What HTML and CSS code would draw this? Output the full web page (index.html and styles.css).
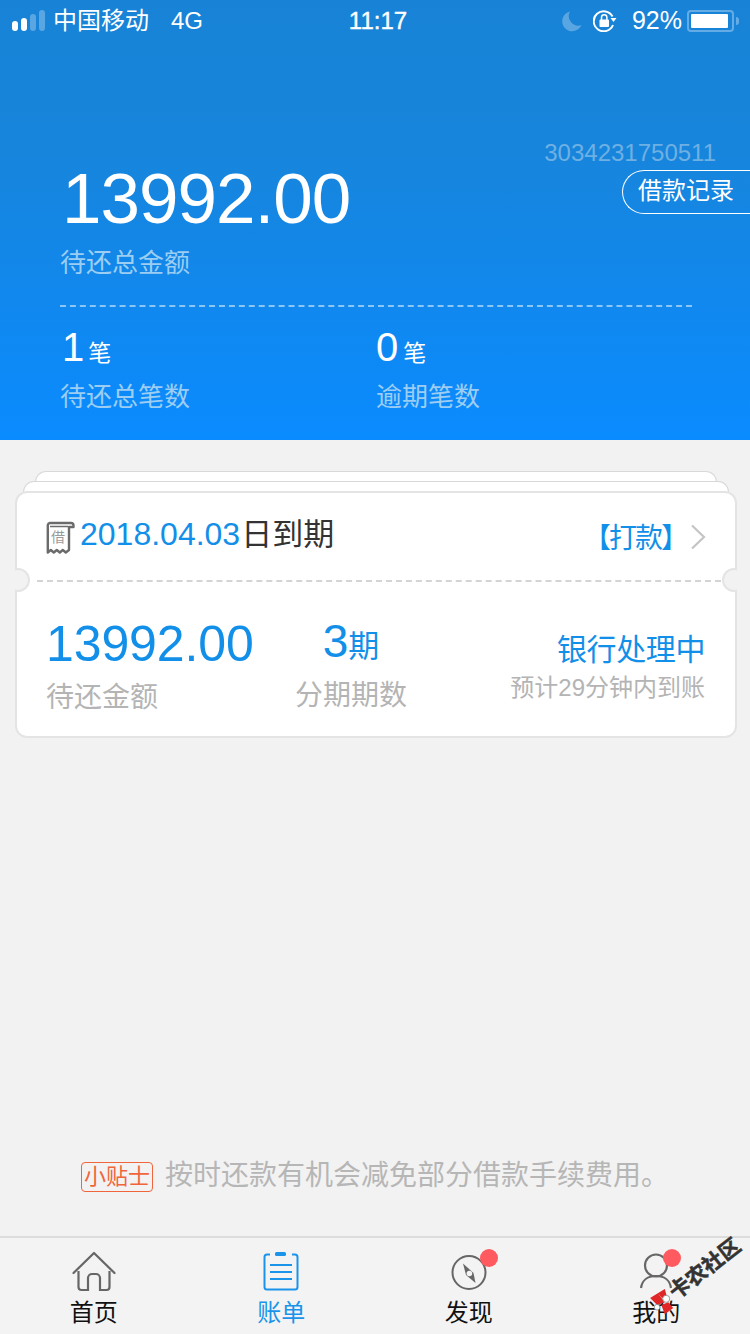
FILE: index.html
```html
<!DOCTYPE html>
<html lang="zh">
<head>
<meta charset="utf-8">
<title>账单</title>
<link rel="stylesheet" href="styles.css">
</head>
<body>
<div class="app">
  <header class="hero">
    <div class="status">
      <div class="status-left">
        <div class="signal"><i class="on s1"></i><i class="on s2"></i><i class="s3"></i><i class="s4"></i></div>
        <span class="carrier">中国移动</span>
        <span class="net">4G</span>
      </div>
      <div class="clock">11:17</div>
      <div class="status-right">
        <svg class="moon" width="20" height="22" viewBox="0 0 20 22"><path d="M8 1.500A10 10 0 1 0 19.500 15 9.500 9.500 0 0 1 8 1.500z" fill="#5aa6e2"/></svg>
        <svg class="lock" width="24" height="22" viewBox="0 0 24 22"><path d="M19.500 6.500A10 10 0 1 0 20 15" fill="none" stroke="#fff" stroke-width="2"/><path d="M17.500 8h6l-3 4z" fill="#fff"/><rect x="6.500" y="9.500" width="9.500" height="7.500" rx="1" fill="#fff"/><path d="M8.500 10V7.500a2.700 2.700 0 0 1 5.400 0V10" fill="none" stroke="#fff" stroke-width="1.500"/></svg>
        <span class="pct">92%</span>
        <div class="battery"><div class="level"></div></div>
        <div class="nub"></div>
      </div>
    </div>
    <div class="summary">
      <div class="summary-main">
        <div class="total">
          <div class="total-num">13992.00</div>
          <div class="hero-label">待还总金额</div>
        </div>
        <div class="records">
          <div class="serial">3034231750511</div>
          <div class="pill">借款记录</div>
        </div>
      </div>
      <div class="hero-rule"></div>
      <div class="stats">
        <div class="stat stat-a">
          <div class="stat-num">1<span class="unit">笔</span></div>
          <div class="hero-label small">待还总笔数</div>
        </div>
        <div class="stat">
          <div class="stat-num">0<span class="unit">笔</span></div>
          <div class="hero-label small">逾期笔数</div>
        </div>
      </div>
    </div>
  </header>

  <main class="content">
    <div class="stack">
      <div class="sheet sheet-back"></div>
      <div class="sheet sheet-mid"></div>
      <section class="card">
        <div class="card-top">
          <svg class="bill" width="30" height="34" viewBox="0 0 30 34"><path d="M4 3h21a2.500 2.500 0 0 1 2.500 2.500V7H23V30l-3.200 2.500-3-2.500-3 2.500-3-2.500-3 2.500-3-2.500-3 2.500V5a2.500 2.500 0 0 1 2-2z" fill="none" stroke="#6b6b6b" stroke-width="2.400" stroke-linejoin="round"/><path d="M4 6.500h18" stroke="#6b6b6b" stroke-width="1.500"/></svg>
          <span class="bill-char">借</span>
          <div class="due"><span class="date">2018.04.03</span><span class="due-text">日到期</span></div>
          <div class="action">【打款】</div>
          <svg class="chev" width="16" height="26" viewBox="0 0 16 26"><path d="M2 1.500 14 13 2 24.500" fill="none" stroke="#c4c4c4" stroke-width="2.200"/></svg>
        </div>
        <div class="perforation"></div>
        <div class="notch notch-l"></div>
        <div class="notch notch-r"></div>
        <div class="card-bottom">
          <div class="col col-amount">
            <div class="amount">13992.00</div>
            <div class="col-label">待还金额</div>
          </div>
          <div class="col col-term">
            <div class="term"><span class="term-num">3</span>期</div>
            <div class="col-label">分期期数</div>
          </div>
          <div class="col col-state">
            <div class="state">银行处理中</div>
            <div class="eta">预计29分钟内到账</div>
          </div>
        </div>
      </section>
    </div>
    <div class="tip">
      <span class="tip-tag">小贴士</span>
      <span class="tip-text">按时还款有机会减免部分借款手续费用。</span>
    </div>
  </main>

  <nav class="tabbar">
    <div class="tab">
      <svg width="46" height="42" viewBox="0 0 46 42"><path d="M2.500 22 23 2l20.500 20" fill="none" stroke="#666" stroke-width="2.200" stroke-linejoin="round" stroke-linecap="round"/><path d="M7.500 20v16a3 3 0 0 0 3 3H17V27a4 4 0 0 1 4-4h4a4 4 0 0 1 4 4v12h6.500a3 3 0 0 0 3-3V20" fill="none" stroke="#666" stroke-width="2.200"/></svg>
      <span>首页</span>
    </div>
    <div class="tab tab-on">
      <svg width="46" height="42" viewBox="0 0 46 42"><path d="M12 3.500H9a2.500 2.500 0 0 0-2.500 2.500v30A2.500 2.500 0 0 0 9 38.500h28a2.500 2.500 0 0 0 2.500-2.500V6A2.500 2.500 0 0 0 37 3.500h-3" fill="none" stroke="#1a93ea" stroke-width="2"/><rect x="17" y="1" width="11" height="4" rx="1.500" fill="#1a93ea"/><path d="M12 14h22M12 21h22M12 28h22" stroke="#1a93ea" stroke-width="2"/></svg>
      <span>账单</span>
    </div>
    <div class="tab">
      <svg width="46" height="42" viewBox="0 0 46 42"><circle cx="23" cy="21.500" r="16.500" fill="none" stroke="#666" stroke-width="2"/><path d="M17 12.500l10.500 9.500 2 10L20 24z" fill="#666"/><circle cx="23.400" cy="22.500" r="2.800" fill="#f3f3f3"/></svg>
      <span>发现</span>
      <i class="dot"></i>
    </div>
    <div class="tab tab-me">
      <svg width="46" height="42" viewBox="0 0 46 42"><circle cx="23" cy="14.500" r="11" fill="none" stroke="#666" stroke-width="2.200"/><path d="M8 37c1-8 7-12 15-12s14 4 15 12" fill="none" stroke="#666" stroke-width="2.200"/></svg>
      <span>我的</span>
      <i class="dot"></i>
    </div>
  </nav>

  <div class="watermark">
    <svg width="28" height="28" viewBox="0 0 40 40"><path d="M3 13 14 6l10 13-11 4zM14 6 24 0l3 11-7 2zM19 23l10-4 7 8-12 9z" fill="#e02626"/><circle cx="26" cy="14" r="5" fill="#fff" stroke="#777"/><circle cx="13" cy="26" r="4" fill="#fff" stroke="#777"/></svg>
    <span class="wm-text">卡农社区</span>
  </div>
</div>
</body>
</html>
```

FILE: styles.css
```css
* { box-sizing: border-box; }
html, body { margin: 0; padding: 0; }
body {
  font-family: "Liberation Sans", "Noto Sans CJK SC", sans-serif;
  background: #f2f2f2;
}
.app {
  position: relative;
  width: 750px;
  height: 1334px;
  overflow: hidden;
  display: flex;
  flex-direction: column;
}

/* Hero */
.hero {
  height: 440px;
  flex: none;
  background: linear-gradient(180deg, #1883d6 0%, #1785dc 35%, #0a8bff 100%);
  color: #fff;
  display: flex;
  flex-direction: column;
}
.status {
  height: 41px;
  flex: none;
  display: grid;
  grid-template-columns: 1fr auto 1fr;
  align-items: center;
  padding: 0 11px 0 12px;
}
.status-left { display: flex; align-items: center; }
.signal { display: flex; align-items: flex-end; gap: 3px; height: 21px; margin-right: 8px; }
.signal i { display: block; width: 6px; border-radius: 3px; background: #5aa6e2; }
.signal .on { background: #fff; }
.s1 { height: 10px; }
.s2 { height: 13px; }
.s3 { height: 17px; }
.s4 { height: 21px; }
.carrier { font-size: 24px; line-height: 30px; }
.net { font-size: 24px; margin-left: 22px; }
.clock { font-size: 24px; font-weight: 400; -webkit-text-stroke: 0.4px #fff; margin-left: 5px; }
.status-right { display: flex; align-items: center; justify-content: flex-end; }
.moon { margin-right: 11px; }
.lock { margin-right: 15px; }
.pct { font-size: 25px; margin-right: 5px; }
.battery {
  width: 47px;
  height: 22px;
  border: 2px solid #64ace6;
  border-radius: 4px;
  padding: 2px;
}
.level { width: 37px; height: 14px; background: #fff; border-radius: 1px; }
.nub {
  width: 3px;
  height: 8px;
  margin-left: 2px;
  background: #64ace6;
  border-radius: 0 3px 3px 0;
}

.summary { padding: 0 0 0 60px; flex: 1; display: flex; flex-direction: column; }
.summary-main { display: flex; justify-content: space-between; height: 265px; padding-top: 76px; }
.total-num { font-size: 71px; line-height: 84px; margin-left: 2px; margin-top: 40px; letter-spacing: -1px; }
.hero-label { font-size: 26px; line-height: 34px; color: #9ccdf3; margin-top: 5px; }
.records { display: flex; flex-direction: column; align-items: flex-end; padding-top: 22px; }
.serial { font-size: 24px; line-height: 28px; color: #6fb0e4; margin-right: 34px; }
.pill {
  width: 128px;
  height: 44px;
  margin-top: 3px;
  border: 1px solid #fff;
  border-right: 0;
  border-radius: 22px 0 0 22px;
  font-size: 24px;
  line-height: 40px;
  padding-left: 15px;
  white-space: nowrap;
}
.hero-rule {
  width: 632px;
  border-top: 2px dashed #8cc6f5;
  margin-top: -1px;
  height: 0;
}
.stats { display: flex; margin-top: 17px; }
.stat { display: flex; flex-direction: column; }
.stat-a { width: 316px; }
.stat-num { font-size: 40px; line-height: 46px; }
.stat-a .stat-num { margin-left: 2px; }
.unit { font-size: 23px; margin-left: 5px; }
.stat-a .unit { margin-left: 4px; }
.hero-label.small { margin-top: 3px; line-height: 36px; }

/* Content */
.content { flex: 1; display: flex; flex-direction: column; min-height: 0; }
.stack { padding: 31px 13px 0 15px; position: relative; }
.sheet {
  background: #fff;
  border: 1px solid #d8d8d8;
  border-bottom: 0;
  border-radius: 12px 12px 0 0;
}
.sheet-back { margin: 0 20px; height: 11px; }
.sheet-mid { margin: -1px 8px 0; height: 11px; }
.card {
  position: relative;
  height: 247px;
  background: #fff;
  border: 2px solid #e4e4e4;
  border-radius: 12px;
  margin-top: -1px;
}
.card-top {
  position: relative;
  height: 87px;
  display: flex;
  align-items: center;
  padding: 0 29px 0 29px;
}
.bill { flex: none; margin-right: 4px; }
.bill-char {
  position: absolute;
  left: 34px;
  top: 36px;
  font-size: 14px;
  line-height: 16px;
  color: #9a9a9a;
}
.due { font-size: 32px; line-height: 44px; flex: 1; display: flex; align-items: baseline; margin-bottom: 4px; }
.date { color: #128fe8; }
.due-text { color: #333; font-size: 31px; margin-left: 1px; }
.action { font-size: 28px; color: #128fe8; margin-right: 3px; margin-top: -1px; letter-spacing: -2px; }
.chev { margin-top: 0; }
.perforation { border-top: 2px dashed #d4d4d4; margin: 0 14px 0 20px; }
.notch {
  position: absolute;
  top: 75px;
  width: 24px;
  height: 24px;
  border-radius: 50%;
  background: #f2f2f2;
  border: 2px solid #e4e4e4;
}
.notch-l { left: -11px; clip-path: inset(-2px -2px -2px 9px); }
.notch-r { right: -11px; clip-path: inset(-2px 9px -2px -2px); }
.card-bottom { display: flex; padding: 34px 30px 0 29px; }
.col { display: flex; flex-direction: column; }
.col-amount { width: 249px; flex: none; }
.amount { font-size: 50px; line-height: 56px; color: #128fe8; letter-spacing: -0.1px; }
.col-label { font-size: 28px; line-height: 38px; color: #b4b4b4; margin-top: 7px; }
.col-term { flex: none; align-items: center; }
.term { font-size: 31px; line-height: 56px; color: #128fe8; height: 56px; margin-top: -3px; }
.term-num { font-size: 46px; }
.col-term .col-label { margin-top: 8px; }
.col-state { margin-left: auto; align-items: flex-end; padding-top: 12px; }
.state { font-size: 30px; line-height: 44px; color: #128fe8; letter-spacing: -0.4px; }
.eta { font-size: 24px; line-height: 32px; color: #b4b4b4; }

.tip {
  margin-top: auto;
  height: 46px;
  margin-bottom: 40px;
  display: flex;
  align-items: center;
  padding-left: 81px;
}
.tip-tag {
  width: 72px;
  height: 30px;
  border: 1px solid #f0653c;
  border-radius: 4px;
  color: #f0653c;
  font-size: 22px;
  line-height: 28px;
  text-align: center;
  white-space: nowrap;
  margin-right: 12px;
  margin-top: 7px;
}
.tip-text { font-size: 28px; color: #b6b6b6; white-space: nowrap; }

/* Tab bar */
.tabbar {
  height: 98px;
  flex: none;
  border-top: 2px solid #dcdcdc;
  display: flex;
  background: #f3f3f3;
}
.tab {
  position: relative;
  width: 187.500px;
  display: flex;
  flex-direction: column;
  align-items: center;
  padding-top: 13px;
  color: #111;
  font-size: 24px;
}
.tab svg { display: block; }
.tab span { line-height: 32px; margin-top: 4px; }
.tab-on { color: #1a93ea; }
.dot {
  position: absolute;
  top: 11px;
  left: 105px;
  width: 18px;
  height: 18px;
  border-radius: 50%;
  background: #ff5a5f;
}
.tab-me .dot { left: 100px; }

/* Watermark */
.watermark { position: absolute; left: 648px; top: 1284px; width: 100px; height: 50px; }
.watermark svg { position: absolute; left: 0; top: 5px; }
.wm-text {
  position: absolute;
  left: 15px;
  top: -28px;
  font-size: 21px;
  font-weight: 700;
  line-height: 26px;
  color: #333;
  white-space: nowrap;
  transform: rotate(-38deg);
  transform-origin: center;
  -webkit-text-stroke: 0.5px #333;
}
```
